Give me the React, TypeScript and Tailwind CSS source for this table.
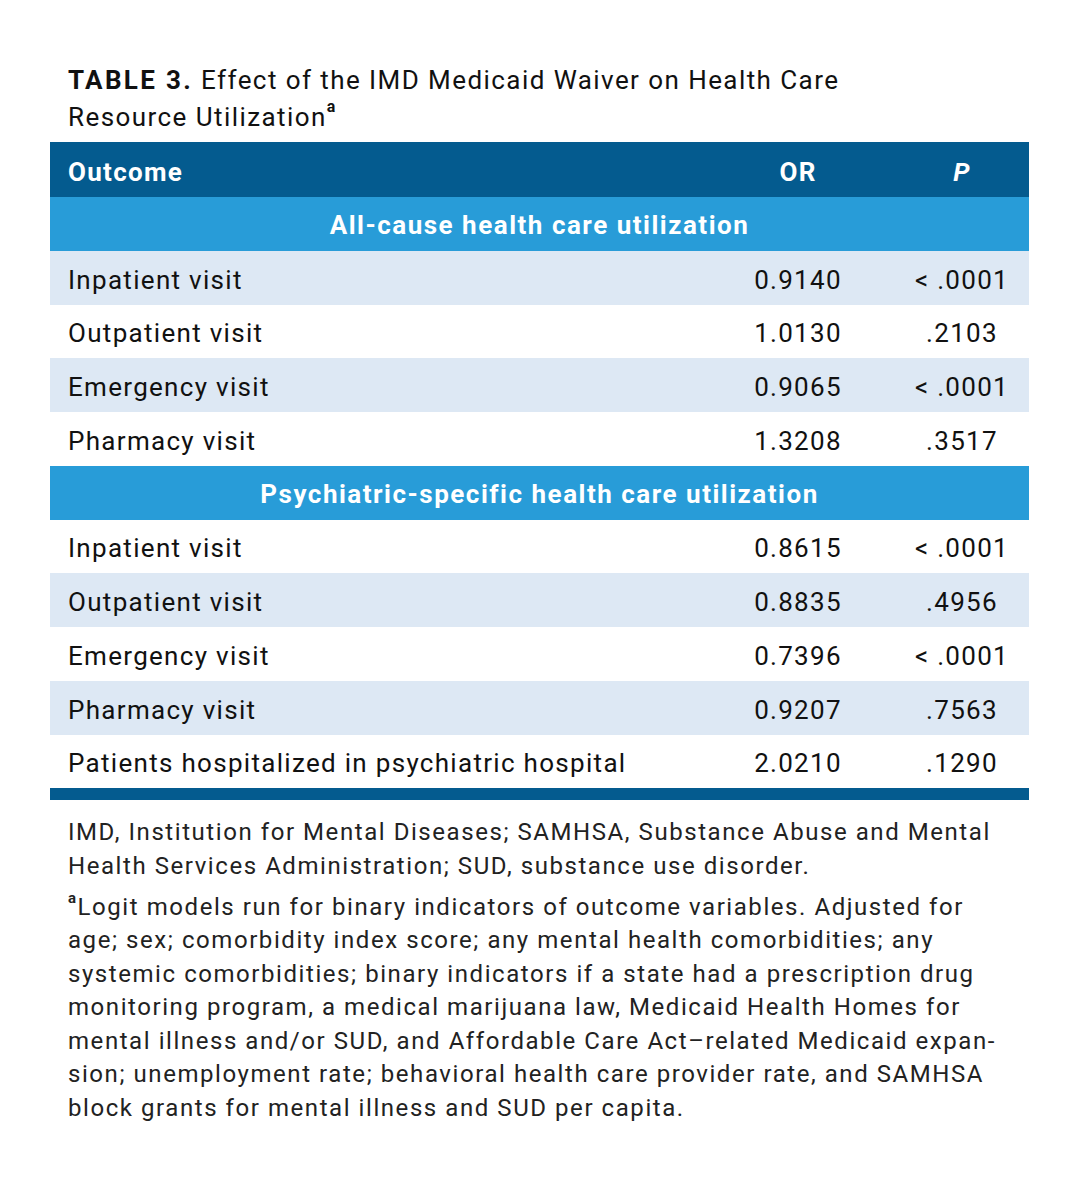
import React from "react";

type Row = { name: string; or: string; p: string; shade: boolean };

const sec1: Row[] = [
  { name: "Inpatient visit", or: "0.9140", p: "< .0001", shade: true },
  { name: "Outpatient visit", or: "1.0130", p: ".2103", shade: false },
  { name: "Emergency visit", or: "0.9065", p: "< .0001", shade: true },
  { name: "Pharmacy visit", or: "1.3208", p: ".3517", shade: false },
];
const sec2: Row[] = [
  { name: "Inpatient visit", or: "0.8615", p: "< .0001", shade: false },
  { name: "Outpatient visit", or: "0.8835", p: ".4956", shade: true },
  { name: "Emergency visit", or: "0.7396", p: "< .0001", shade: false },
  { name: "Pharmacy visit", or: "0.9207", p: ".7563", shade: true },
  { name: "Patients hospitalized in psychiatric hospital", or: "2.0210", p: ".1290", shade: false },
];

function DataRow({ r }: { r: Row }) {
  return (
    <div className={`flex h-[53.75px] items-center pt-[5px] tracking-[0.05em] ${r.shade ? "bg-[#dde8f4]" : "bg-white"}`}>
      <div className="flex-1 pl-[18px]">{r.name}</div>
      <div className="w-[100px] text-center">{r.or}</div>
      <div className="w-[106px] text-center ml-[61px] mr-[14px]">{r.p}</div>
    </div>
  );
}

function Section({ title }: { title: string }) {
  return (
    <div className="flex h-[53.75px] items-center justify-center pt-[4px] bg-[#289cd8] text-white font-bold tracking-[0.058em]">
      {title}
    </div>
  );
}

export default function App() {
  return (
    <div
      className="bg-white w-[1079px] h-[1181px] text-[#111]"
      style={{ fontFamily: "Roboto, 'Liberation Sans', sans-serif" }}
    >
      <div className="pt-[62px] pl-[68px] pr-[20px] text-[26px] leading-[37px] tracking-[0.055em]">
        <span className="font-bold tracking-[0.09em]">TABLE 3.</span> Effect of the IMD Medicaid Waiver on Health Care
        <br />
        Resource Utilization<sup className="text-[16px] align-[6px] font-bold">a</sup>
      </div>
      <div className="mx-[50px] mt-[6px] text-[26px]">
        <div className="flex h-[55px] items-center pt-[5px] bg-[#045b8f] text-white font-bold tracking-[0.05em]">
          <div className="flex-1 pl-[18px]">Outcome</div>
          <div className="w-[100px] text-center">OR</div>
          <div className="w-[106px] text-center ml-[61px] mr-[14px] italic">P</div>
        </div>
        <Section title="All-cause health care utilization" />
        {sec1.map((r, i) => (
          <DataRow key={i} r={r} />
        ))}
        <Section title="Psychiatric-specific health care utilization" />
        {sec2.map((r, i) => (
          <DataRow key={i} r={r} />
        ))}
        <div className="h-[12px] bg-[#045b8f]" />
      </div>
      <div className="pl-[68px] pr-[10px] mt-[16px] text-[24px] leading-[33.4px] text-[#222] tracking-[0.065em]">
        <p>
          IMD, Institution for Mental Diseases; SAMHSA, Substance Abuse and Mental
          <br />
          Health Services Administration; SUD, substance use disorder.
        </p>
        <p className="mt-[8px]">
          <sup className="text-[15px] align-[5px] font-bold">a</sup>Logit models run for binary indicators of outcome variables. Adjusted for
          <br />
          age; sex; comorbidity index score; any mental health comorbidities; any
          <br />
          systemic comorbidities; binary indicators if a state had a prescription drug
          <br />
          monitoring program, a medical marijuana law, Medicaid Health Homes for
          <br />
          mental illness and/or SUD, and Affordable Care Act–related Medicaid expan-
          <br />
          sion; unemployment rate; behavioral health care provider rate, and SAMHSA
          <br />
          block grants for mental illness and SUD per capita.
        </p>
      </div>
    </div>
  );
}
